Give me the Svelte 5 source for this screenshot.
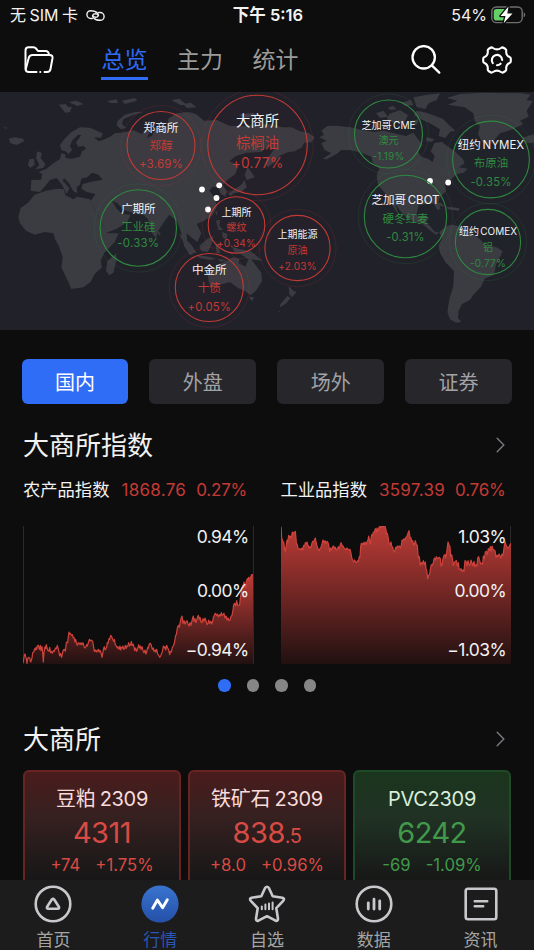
<script lang="ts">
    const UP = '#c43a35';
    const DOWN = '#2f8a40';

    const topTabs = ['总览', '主力', '统计'];
    const markets = ['国内', '外盘', '场外', '证券'];
    let activeTop = $state(0);
    let activeMarket = $state(0);
    let activeNav = $state(1);

    // x, y, r: circle on the map; rows: vertical centre of the three texts
    const bubbles = [
        { name: '郑商所', item: '郑醇', change: '+3.69%', x: 161, y: 53.5, r: 34, rows: [35.5, 53.5, 72], size: 11.7, num: 11.5 },
        { name: '大商所', item: '棕榈油', change: '+0.77%', x: 257.5, y: 53, r: 49.7, rows: [28.5, 50.5, 71.5], size: 14.4, num: 13.8 },
        { name: '广期所', item: '工业硅', change: '-0.33%', x: 138.3, y: 136, r: 38.2, rows: [116.5, 135, 150.5], size: 11.6, num: 11.5 },
        { name: '上期所', item: '螺纹', change: '+0.34%', x: 236.5, y: 133, r: 28.3, rows: [120, 135.5, 151.5], size: 10, num: 10 },
        { name: '中金所', item: '十债', change: '+0.05%', x: 209.3, y: 195.5, r: 34, rows: [178, 196, 215], size: 11.6, num: 11.3 },
        { name: '上期能源', item: '原油', change: '+2.03%', x: 297.5, y: 156, r: 32.6, rows: [142.5, 158.5, 174], size: 10, num: 10 },
        { name: '芝加哥 CME', item: '澳元', change: '-1.19%', x: 388.5, y: 42, r: 34, rows: [33, 48.5, 64.5], size: 10.1, num: 10 },
        { name: '纽约 NYMEX', item: '布原油', change: '-0.35%', x: 491, y: 67.5, r: 38.4, rows: [52.5, 71, 89.5], size: 11.5, num: 11.3 },
        { name: '芝加哥 CBOT', item: '硬冬红麦', change: '-0.31%', x: 405.5, y: 124.5, r: 41.2, rows: [107.5, 126.5, 145], size: 11.5, num: 11.2 },
        { name: '纽约 COMEX', item: '铝', change: '-0.77%', x: 488, y: 150, r: 32.6, rows: [139.5, 155.5, 171.5], size: 10, num: 10 },
    ];

    const cities = [[202, 97.5], [219.2, 93.3], [216.5, 106], [208, 117.5], [430, 89], [448.2, 90.5]];

    const indexes = [
        {
            name: '农产品指数', value: '1868.76', change: '0.27%', labels: ['0.94%', '0.00%', '−0.94%'],
            line: '0,412 2,400 4,388 6,384 8,392 10,398 12,412 14,398 17,394 20,396 23,408 25,402 27,396 29,380 32,378 35,368 37,372 39,364 41,370 43,360 46,358 49,370 52,358 54,374 57,362 59,380 61,408 63,380 66,362 68,368 70,356 72,366 75,374 78,376 80,364 83,380 85,376 88,382 91,374 94,376 97,366 100,368 103,358 105,366 107,374 110,390 113,382 116,394 118,384 121,372 124,370 127,376 130,350 132,348 134,350 136,332 138,318 140,324 142,322 145,328 148,326 151,336 153,334 156,348 158,340 160,350 163,358 166,350 169,352 171,356 174,350 176,356 178,354 180,350 183,362 186,366 189,362 191,356 193,360 196,350 199,340 201,344 204,342 207,344 209,346 211,358 214,376 217,372 220,378 223,372 225,376 227,370 229,378 232,374 235,384 237,394 239,384 242,366 244,362 246,372 248,370 251,364 253,350 255,352 258,338 260,340 263,328 266,332 269,340 272,346 274,340 277,356 280,360 283,366 285,362 288,370 291,360 293,372 295,364 298,366 300,360 302,370 305,366 307,358 309,368 311,360 314,362 317,350 320,360 323,356 325,346 327,358 330,354 333,362 335,374 338,366 341,376 344,368 347,356 349,366 352,360 354,370 357,362 360,374 363,380 366,372 369,384 371,378 374,364 376,366 379,354 382,352 385,358 388,370 391,366 393,376 396,372 398,378 401,370 404,384 407,388 410,394 413,390 415,384 418,378 421,360 423,366 426,362 428,372 431,358 434,366 437,372 440,386 442,376 445,378 448,364 451,360 454,352 456,340 458,328 460,326 462,312 464,302 467,298 469,304 471,292 474,278 477,270 480,292 483,284 486,294 489,288 492,284 495,294 498,300 501,290 504,298 507,284 509,276 511,270 513,286 516,278 519,290 521,284 524,272 526,268 529,280 531,274 534,288 537,290 540,278 543,286 546,276 549,284 552,296 555,292 557,282 560,292 563,286 566,294 569,286 571,274 574,268 577,262 580,268 583,264 586,272 589,266 592,270 595,260 597,268 600,266 603,262 606,276 609,270 612,282 615,276 618,284 621,282 624,272 627,268 630,252 632,236 635,232 638,240 641,224 644,238 647,238 650,236 652,218 654,204 656,188 659,178 661,182 663,168 666,176 668,184 670,166 673,158 675,162 677,154 680,158 683,154 686,146 690,146',
        },
        {
            name: '工业品指数', value: '3597.39', change: '0.76%', labels: ['1.03%', '0.00%', '−1.03%'],
            line: '0,4 2,36 4,42 6,50 8,48 10,64 13,76 16,58 18,42 20,50 23,28 26,36 28,30 31,36 34,18 36,26 38,20 41,18 43,16 46,50 48,54 51,66 54,70 57,68 60,72 63,66 65,72 68,58 71,60 73,50 76,54 78,48 81,58 84,66 86,62 89,66 92,54 95,46 98,48 100,42 103,36 106,52 108,60 111,68 114,74 117,68 120,64 123,54 126,42 129,50 132,44 135,52 138,46 141,50 143,58 146,76 149,66 152,72 155,62 158,60 160,68 163,64 166,72 169,70 172,62 175,68 178,56 180,50 183,58 186,60 189,66 192,68 195,72 198,66 201,70 204,72 207,70 210,82 212,94 215,104 218,108 221,102 224,108 227,110 230,104 232,106 235,92 237,94 239,62 241,52 244,56 247,50 250,56 252,48 255,56 258,48 261,42 263,30 266,46 268,54 270,38 272,26 275,28 277,18 280,20 283,8 286,18 288,6 291,16 294,4 297,0 300,4 303,0 306,3 309,0 312,0 315,12 317,24 319,22 322,38 324,52 327,56 330,48 332,60 335,64 338,76 341,78 344,64 346,68 349,60 352,62 355,60 358,66 361,58 363,42 366,44 369,38 372,42 375,34 378,30 381,22 384,14 387,34 390,36 392,46 395,44 398,58 401,52 403,44 406,56 409,58 411,86 413,96 415,92 418,118 421,110 424,114 427,104 430,116 433,108 435,128 437,132 440,158 443,148 446,144 448,130 451,116 454,118 457,110 460,96 463,102 466,92 469,98 472,96 475,94 478,98 480,120 483,116 486,98 489,88 492,86 494,96 497,80 499,64 501,48 504,56 507,62 509,92 512,86 515,104 517,118 520,110 523,106 526,104 529,120 532,110 534,128 537,132 540,128 543,136 546,132 549,136 552,104 555,106 558,120 561,104 564,114 567,118 570,102 573,112 576,120 579,106 582,122 585,116 588,120 590,96 593,92 596,104 599,114 602,112 605,114 607,90 610,98 613,78 616,76 619,86 622,68 625,74 628,62 630,76 633,60 636,70 639,72 642,74 645,94 648,88 651,92 654,84 657,90 660,96 663,84 666,88 669,66 672,46 675,56 678,62 681,66 684,64 687,56 690,52',
        },
    ];

    const contracts = [
        { name: '豆粕 2309', price: '4311', frac: '', diff: '+74', pct: '+1.75%', up: true },
        { name: '铁矿石 2309', price: '838', frac: '.5', diff: '+8.0', pct: '+0.96%', up: true },
        { name: 'PVC2309', price: '6242', frac: '', diff: '-69', pct: '-1.09%', up: false },
    ];

    const nav = ['首页', '行情', '自选', '数据', '资讯'];
</script>

<div class="app">
    <header class="status">
        <div class="carrier">
            <span>无 SIM 卡</span>
            <svg width="19" height="13" viewBox="0 0 21 14" fill="none" stroke="#eee" stroke-width="1.6" stroke-linecap="round">
                <path d="M7 10.300H5.300A4.300 4.300 0 0 1 5.300 1.700C8.500 1.700 11 2.500 12.800 4.600C14.500 6.700 13.300 9 10.800 9C9 9 7.800 8 7.200 7" />
                <path d="M14 3.700H15.700A4.300 4.300 0 0 1 15.700 12.300C12.500 12.300 10 11.500 8.200 9.400C6.500 7.300 7.700 5 10.200 5C12 5 13.200 6 13.800 7" />
            </svg>
        </div>
        <strong>下午 5:16</strong>
        <div class="power">
            <span>54%</span>
            <svg width="35" height="18" viewBox="0 0 35 18">
                <rect x="0.8" y="1" width="30.4" height="15.6" rx="4.6" fill="none" stroke="#6f6f6f" stroke-width="1.4" />
                <path d="M5.5 3H16V14.600H5.500Q2.700 14.600 2.700 11.800V5.800Q2.700 3 5.500 3Z" fill="#65cf68" />
                <path d="M32.700 6.200Q34.300 7 34.300 8.800T32.700 11.400Z" fill="#6f6f6f" />
                <path d="M17.500 0.500L9.500 10H14.500L12.700 17.300L21.500 7.600H16.300Z" fill="#fff" stroke="#0d0d0d" stroke-width="2.600" paint-order="stroke" stroke-linejoin="round" />
            </svg>
        </div>
    </header>

    <div class="toolbar">
        <svg class="folder" width="30" height="28" viewBox="0 0 30 28" fill="none" stroke="#fff" stroke-width="2" stroke-linecap="round" stroke-linejoin="round">
            <path d="M12.500 26H5Q1.500 26 1.500 22.500V4.500Q1.500 1.300 4.700 1.300H9.500Q11 1.300 12 2.500L14 5H21.500Q24.700 5 25 8.800" />
            <path d="M1.800 23L4.700 12Q5.500 9 8.500 9H25.500Q29 9 28.500 12.200L26.500 23Q26 26 23 26H20.500M16.200 26H16.300" />
        </svg>
        <nav>
            {#each topTabs as tab, i}
                <button class:active={activeTop === i} onclick={() => activeTop = i}>{tab}</button>
            {/each}
        </nav>
        <svg class="search" width="30" height="30" viewBox="0 0 30 30" fill="none" stroke="#fff" stroke-width="2.300" stroke-linecap="round">
            <circle cx="12.700" cy="12.300" r="11.200" />
            <path d="M20.800 20.400L28.300 27.600" />
        </svg>
        <svg class="gear" width="30" height="28" viewBox="0 0 30 28" fill="none" stroke="#fff" stroke-width="2.100" stroke-linecap="round" stroke-linejoin="round">
            <path d="M9 1.500Q10 1.200 11 2Q15 4.800 19 2Q20 1.200 21 1.500L23.500 3Q24.500 3.700 24.200 5Q23.900 9.500 27.500 11Q28.800 11.500 28.800 12.700V15.300Q28.800 16.500 27.500 17Q23.900 18.500 24.200 23Q24.500 24.300 23.500 25L21 26.500Q20 26.800 19 26Q15 23.200 11 26Q10 26.800 9 26.500L6.500 25Q5.500 24.300 5.800 23Q6.100 18.500 2.500 17Q1.200 16.500 1.200 15.300V12.700Q1.200 11.500 2.500 11Q6.100 9.500 5.800 5Q5.500 3.700 6.500 3Z" />
            <path d="M10.800 17.200A5.200 5.200 0 1 1 20.200 14M18.600 17.700A5.200 5.200 0 0 1 15 19.200" />
        </svg>
    </div>

    <svg class="map" width="534" height="238" viewBox="0 0 534 238">
        <g fill="#3b3b42" transform="translate(0 -2) scale(.33333)">
            <!-- Europe and Asia -->
            <path d="M92 302L94 270L124 269L126 252L116 246L140 236L160 220L180 207L184 190L195 192L197 204L215 206L240 200L246 184L258 176L252 168L234 170L228 157L244 136L234 134L216 152L210 168L216 180L206 192L196 184L184 180L180 165L194 146L214 126L240 112L270 113L308 130L304 143L282 142L296 154L316 147L330 140L345 130L372 127L400 121L425 132L440 112L448 128L440 144L456 138L466 115L500 110L505 86L530 70L565 66L588 72L612 92L650 90L690 108L734 108L770 102L812 103L846 112L875 112L900 124L925 128L944 142L934 157L912 158L906 172L884 184L862 187L838 198L822 218L803 232L796 218L808 198L822 178L802 170L784 186L740 188L708 198L688 214L716 226L706 252L682 270L668 284L680 304L676 320L660 308L656 292L638 290L628 302L646 326L650 350L638 376L612 392L590 402L604 430L592 456L574 442L560 430L562 462L580 492L570 496L552 468L544 428L530 392L508 374L492 396L476 420L468 444L456 430L444 388L430 374L398 368L372 360L352 340L336 332L350 356L366 372L392 374L382 396L350 416L320 428L306 400L288 366L272 334L286 312L260 306L244 296L248 282L270 276L290 272L308 270L296 254L276 248L262 262L244 266L240 284L230 292L232 310L220 304L206 278L192 264L188 272L208 294L200 312L186 284L170 264L150 270L136 288L120 306Z" />
            <!-- Africa, Madagascar -->
            <path d="M104 314L138 302L172 296L192 298L196 316L220 328L232 320L270 328L284 358L304 396L322 430L356 430L344 456L312 490L302 512L306 532L284 552L272 576L250 592L214 597L204 574L184 532L188 502L176 466L166 450L160 430L134 426L104 434L78 422L60 400L55 382L62 354L84 338Z" />
            <path d="M348 490L350 508L340 548L328 556L318 542L322 514Z" />
            <!-- islands of the north and west -->
            <path d="M26 146L44 142L70 146L72 154L50 165L32 160ZM10 112L24 113L16 116ZM88 208L102 206L104 224L90 234L84 224ZM112 184L126 190L122 204L136 222L130 234L106 238L118 224L108 204ZM176 44L196 42L206 52L216 50L210 66L196 68ZM206 36L230 32L250 42L232 48ZM320 34L350 28L354 38L334 40ZM366 32L404 24L412 32L374 42ZM352 94L374 74L406 66L430 66L398 76L370 88L366 102L378 114L362 118L350 106ZM514 30L538 26L560 44L542 46ZM550 42L572 38L590 52L560 54ZM716 74L760 68L774 78L736 84Z" />
            <!-- Japan, the Philippines, Indonesia -->
            <path d="M742 232L750 240L764 262L740 270L734 256ZM734 270L740 292L722 306L700 310L692 318L684 312L704 298L722 286ZM646 366L652 362L650 378ZM648 392L660 390L658 408L670 420L656 420ZM666 426L682 432L680 450L668 442ZM536 430L556 446L574 464L590 488L578 490L556 466ZM588 494L628 500L648 506L630 510L598 504ZM598 468L622 446L640 438L636 460L624 486L604 484ZM646 462L666 458L654 470L662 490L650 488ZM696 470L720 478L752 484L788 512L768 510L742 506L722 492L704 488ZM472 422L482 430L478 438ZM652 506L680 510L662 516Z" />
            <!-- Australia, New Zealand -->
            <path d="M622 548L648 536L662 520L684 510L700 502L718 506L716 520L736 530L748 500L760 516L784 548L786 574L768 602L752 616L734 602L714 594L690 576L660 584L632 592L626 574ZM746 620L762 622L756 634ZM866 588L880 602L890 606L876 622L868 612ZM862 618L872 624L856 642L840 652L840 644ZM836 662L840 664L838 668Z" />
            <!-- North America -->
            <path d="M958 142L972 134L964 122L982 108L1010 107L1052 112L1084 120L1124 126L1152 122L1190 132L1218 138L1240 128L1256 150L1268 164L1254 186L1264 200L1284 206L1298 216L1304 198L1292 184L1304 158L1326 156L1346 172L1364 184L1388 206L1394 220L1376 232L1402 236L1392 248L1372 252L1350 270L1336 286L1338 304L1320 320L1314 338L1322 356L1312 360L1300 340L1280 342L1256 346L1250 372L1262 386L1276 376L1286 384L1278 398L1292 410L1302 424L1318 428L1308 434L1288 420L1266 400L1242 396L1210 374L1184 340L1196 372L1188 364L1164 320L1134 284L1130 256L1138 236L1118 218L1114 200L1084 188L1050 180L1024 180L1010 192L980 208L968 206L994 190L974 180L964 160L980 152Z" />
            <path d="M1128 70L1150 62L1164 80L1140 84ZM1168 72L1200 60L1224 76L1214 96L1178 98L1160 88ZM1164 52L1180 48L1190 58L1170 60ZM1204 38L1232 30L1240 46L1216 48ZM1240 22L1282 14L1320 10L1310 30L1286 40L1276 58L1250 50ZM1236 92L1256 88L1250 104L1240 106ZM1248 62L1280 68L1300 76L1328 86L1346 104L1366 122L1350 126L1336 144L1316 138L1320 118L1290 100L1262 88L1242 76ZM1280 142L1304 148L1294 156L1278 152ZM1294 334L1324 340L1334 350L1312 346ZM1340 350L1378 354L1376 362L1344 358Z" />
            <!-- Greenland -->
            <path d="M1344 44L1372 32L1340 24L1380 12L1450 8L1566 10L1592 14L1580 30L1598 34L1580 62L1586 80L1560 92L1570 102L1538 118L1500 130L1480 154L1464 168L1446 156L1434 132L1440 108L1424 92L1420 70L1394 52ZM1566 144L1602 132L1602 158L1576 160Z" />
            <!-- South America -->
            <path d="M1318 426L1340 408L1356 404L1390 412L1416 430L1438 446L1456 464L1490 472L1508 484L1498 504L1488 524L1482 554L1454 566L1442 592L1420 614L1410 630L1386 642L1376 662L1374 684L1384 696L1368 698L1350 688L1342 666L1348 628L1360 588L1362 544L1336 516L1320 488L1316 466L1326 446Z" />
        </g>
        {#each cities as [x, y]}
            <circle cx={x} cy={y} r="2.900" fill="#fff" />
        {/each}
        {#each bubbles as b}
            {@const color = b.change.startsWith('+') ? UP : DOWN}
            <circle cx={b.x} cy={b.y} r={b.r + 6} fill="none" stroke={color} stroke-opacity=".16" />
            <circle cx={b.x} cy={b.y} r={b.r} fill={color} fill-opacity=".02" stroke={color} stroke-width="1.100" />
            <g text-anchor="middle" font-size={b.size}>
                <text x={b.x} y={b.rows[0] + b.size * .38} fill="#f2f2f2" word-spacing="-1.500">{b.name}</text>
                <text x={b.x} y={b.rows[1] + b.size * .38} fill={color}>{b.item}</text>
                <text x={b.x} y={b.rows[2] + b.num * .36} fill={color} font-size={b.num} letter-spacing=".2">{b.change}</text>
            </g>
        {/each}
    </svg>

    <main>
        <div class="markets">
            {#each markets as market, i}
                <button class:active={activeMarket === i} onclick={() => activeMarket = i}>{market}</button>
            {/each}
        </div>

        <div class="title">
            <h2>大商所指数</h2>
            <svg width="9" height="16" viewBox="0 0 9 16"><path d="M1.200 1.200L7.800 8L1.200 14.800" fill="none" stroke="#777b7f" stroke-width="1.400" stroke-linecap="round" /></svg>
        </div>

        <div class="indexes">
            {#each indexes as index, i}
                <section>
                    <div class="quote">
                        <span class="name">{index.name}</span>
                        <span class="value">{index.value}</span>
                        <span class="change">{index.change}</span>
                    </div>
                    <div class="chart">
                        <svg width="230" height="138" viewBox="0 0 690 414" preserveAspectRatio="none">
                            <defs>
                                <linearGradient id="fill{i}" gradientUnits="userSpaceOnUse" x1="0" y1={i ? 0 : 146} x2="0" y2="414">
                                    <stop offset="0" stop-color="#bd3b36" />
                                    <stop offset="1" stop-color="#211111" />
                                </linearGradient>
                            </defs>
                            <polygon points="0,414 {index.line} 690,414" fill="url(#fill{i})" />
                            <polyline points={index.line} fill="none" stroke="#cf433c" stroke-width="3.600" stroke-linejoin="round" />
                        </svg>
                        <div class="scale">
                            {#each index.labels as label}
                                <span>{label}</span>
                            {/each}
                        </div>
                    </div>
                </section>
            {/each}
        </div>

        <div class="pager">
            {#each [0, 1, 2, 3] as page}
                <i class:active={page === 0}></i>
            {/each}
        </div>

        <div class="title exchange">
            <h2>大商所</h2>
            <svg width="9" height="16" viewBox="0 0 9 16"><path d="M1.200 1.200L7.800 8L1.200 14.800" fill="none" stroke="#777b7f" stroke-width="1.400" stroke-linecap="round" /></svg>
        </div>

        <div class="contracts">
            {#each contracts as c}
                <article class:down={!c.up}>
                    <h3>{c.name}</h3>
                    <div class="price">{c.price}<small>{c.frac}</small></div>
                    <div class="diff"><span>{c.diff}</span><span>{c.pct}</span></div>
                </article>
            {/each}
        </div>
    </main>

    <footer>
        {#each nav as label, i}
            <button class:active={activeNav === i} onclick={() => activeNav = i}>
                <svg width="40" height="38" viewBox="-20 -19 40 38" fill="none" stroke="#c9c9cd" stroke-width="2.600" stroke-linecap="round" stroke-linejoin="round">
                    {#if i === 0}
                        <circle r="17.300" />
                        <path d="M-1.200 -4.500Q0 -6 1.200 -4.500L6 3Q6.500 4.700 4.800 4.800H-4.800Q-6.500 4.700 -6 3Z" />
                    {:else if i === 1}
                        <defs>
                            <linearGradient id="navFill" x1="0" y1="0" x2="0" y2="1">
                                <stop offset="0" stop-color="#3974cf" />
                                <stop offset="1" stop-color="#2450a8" />
                            </linearGradient>
                        </defs>
                        <circle r="18.600" fill="url(#navFill)" stroke="none" />
                        <path d="M-7.300 4.200L-2.600 -4L2.600 3.800L7.300 -4.200" stroke="#fff" stroke-width="2.900" />
                    {:else if i === 2}
                        <path d="M-1.800 -16.200Q0 -18.400 1.800 -16.200L5.700 -7.800L15.400 -6.300Q18 -5.400 16.200 -3.200L9.300 4.200L11 14.800Q11 17.400 8.600 16.700L0 12.200L-8.600 16.700Q-11 17.400 -11 14.800L-9.300 4.200L-16.200 -3.200Q-18 -5.400 -15.400 -6.300L-5.700 -7.800Z" />
                        <path d="M-5.200 2.600V5.200M-1.600 .6V5.200M2 -.4V5.200M5.600 -1.600V5.200" stroke-width="2" />
                    {:else if i === 3}
                        <circle r="17.300" />
                        <path d="M-5.700 -1.200V5M0 -4.800V5M5.700 -3V5" stroke-width="2.800" />
                    {:else}
                        <rect x="-15.300" y="-15.300" width="30.600" height="30.600" rx="2.200" />
                        <path d="M-6.200 -2.700H6.200M-6.200 2.300H2.200" />
                    {/if}
                </svg>
                <span>{label}</span>
            </button>
        {/each}
    </footer>
</div>

<style>
    :global(body) {
        background: #0d0d0d;
    }

    .app {
        display: flex;
        flex-direction: column;
        width: 534px;
        height: 950px;
        overflow: hidden;
        background: #0d0d0d;
        color: #f2f2f2;
        font-family: Inter, "Noto Sans CJK SC", sans-serif;
    }

    button {
        padding: 0;
        border: none;
        background: none;
        font-family: inherit;
        cursor: pointer;
    }

    svg {
        display: block;
        flex: none;
    }

    .status {
        display: grid;
        grid-template-columns: 1fr auto 1fr;
        align-items: center;
        height: 30px;
        padding: 0 8px 0 10px;
        font-size: 16px;
        line-height: 30px;
    }

    .status strong {
        font-weight: 600;
        font-size: 16.5px;
    }

    .carrier, .power {
        display: flex;
        align-items: center;
        gap: 8px;
    }

    .carrier {
        word-spacing: -1px;
    }

    .power {
        justify-content: flex-end;
        gap: 4px;
    }

    .toolbar {
        display: flex;
        align-items: center;
        height: 62px;
        padding: 0 22px 0 24px;
        box-sizing: border-box;
    }

    .folder {
        margin-top: -2px;
    }

    .toolbar nav {
        display: flex;
        gap: 28.500px;
        flex: 1;
        margin-left: 47px;
    }

    .toolbar nav button {
        width: 47px;
        height: 38px;
        border-bottom: 3px solid transparent;
        color: #9b9b9b;
        font-size: 23px;
        line-height: 35px;
        padding-top: 1px;
        white-space: nowrap;
    }

    .toolbar nav button.active {
        color: #2f6bf5;
        border-color: #2f6bf5;
    }

    .search {
        margin: -2px 41px 0 0;
    }

    .gear {
        margin-top: -2px;
    }

    .map {
        background: #21212a;
    }

    main {
        flex: 1;
        min-height: 0;
        overflow: hidden;
        padding: 29px 22px 0;
    }

    .markets {
        display: flex;
        gap: 21px;
        margin-left: -.5px;
    }

    .markets button {
        flex: 1;
        height: 45px;
        border-radius: 6px;
        background: #26262b;
        color: #a2a2a6;
        font-size: 20px;
    }

    .markets button.active {
        background: #2f6df6;
        color: #fff;
    }

    .title {
        display: flex;
        align-items: center;
        justify-content: space-between;
        height: 40px;
        margin: 21px 7px 0 1px;
    }

    h2, h3 {
        margin: 0;
        font-weight: 400;
    }

    h2 {
        padding-top: 2px;
        font-size: 26px;
        line-height: 40px;
    }

    .indexes {
        display: flex;
        gap: 27px;
        margin: 10px 1px 0;
    }

    .indexes section {
        width: 230.500px;
    }

    .quote {
        display: flex;
        height: 30px;
        color: #c43a35;
        font-size: 17px;
        line-height: 30px;
        white-space: nowrap;
    }

    .quote .name {
        color: #f2f2f2;
        font-size: 17.300px;
    }

    .quote .value {
        margin: 0 10px 0 12px;
        letter-spacing: .3px;
    }

    .quote .change {
        letter-spacing: -.2px;
    }

    .chart {
        display: grid;
        margin-top: 21px;
        height: 138px;
        box-shadow: inset 1px 0 #2a2a2a, inset -1px -1px #2a2a2a;
    }

    .chart > * {
        grid-area: 1 / 1;
    }

    .scale {
        display: flex;
        flex-direction: column;
        align-items: flex-end;
        padding-right: 5px;
        font-size: 17.500px;
        letter-spacing: -.600px;
        line-height: 22px;
    }

    .scale span:nth-child(2) {
        margin: 32px 0 37px;
    }

    .pager {
        display: flex;
        justify-content: center;
        gap: 16px;
        margin-top: 15px;
    }

    .pager i {
        width: 12.500px;
        height: 12.500px;
        border-radius: 50%;
        background: #868686;
    }

    .pager i.active {
        background: #2f6df6;
    }

    .title.exchange {
        margin-top: 27px;
    }

    .contracts {
        display: flex;
        gap: 7px;
        margin: 11px 1px 0;
    }

    article {
        box-sizing: border-box;
        width: 158px;
        height: 130px;
        border: 2px solid #672423;
        border-radius: 6px;
        padding-top: 13px;
        background: linear-gradient(#4a1c1c, #362020 36%, #171717 85%);
        color: #d84b44;
        text-align: center;
    }

    article.down {
        border-color: #1f4a28;
        background: linear-gradient(#1b351d, #203224 36%, #171817 85%);
        color: #41994b;
    }

    h3 {
        color: #f8dcdc;
        font-size: 20px;
        line-height: 29px;
        letter-spacing: -.300px;
        word-spacing: -1px;
        white-space: nowrap;
    }

    .down h3 {
        color: #d8eedb;
    }

    .price {
        font-size: 29px;
        line-height: 38px;
        letter-spacing: -.500px;
    }

    .price small {
        font-size: 20px;
    }

    .diff {
        display: flex;
        justify-content: center;
        gap: 15px;
        margin-top: -4px;
        font-size: 16.700px;
        line-height: 28px;
    }

    footer {
        display: grid;
        grid-template-columns: repeat(5, 1fr);
        height: 70px;
        background: #1c1c1c;
    }

    footer button {
        display: flex;
        flex-direction: column;
        align-items: center;
        padding-top: 5px;
        color: #a5a5a5;
        font-size: 17px;
        line-height: 34px;
    }

    footer button.active {
        color: #2856b4;
    }
</style>
